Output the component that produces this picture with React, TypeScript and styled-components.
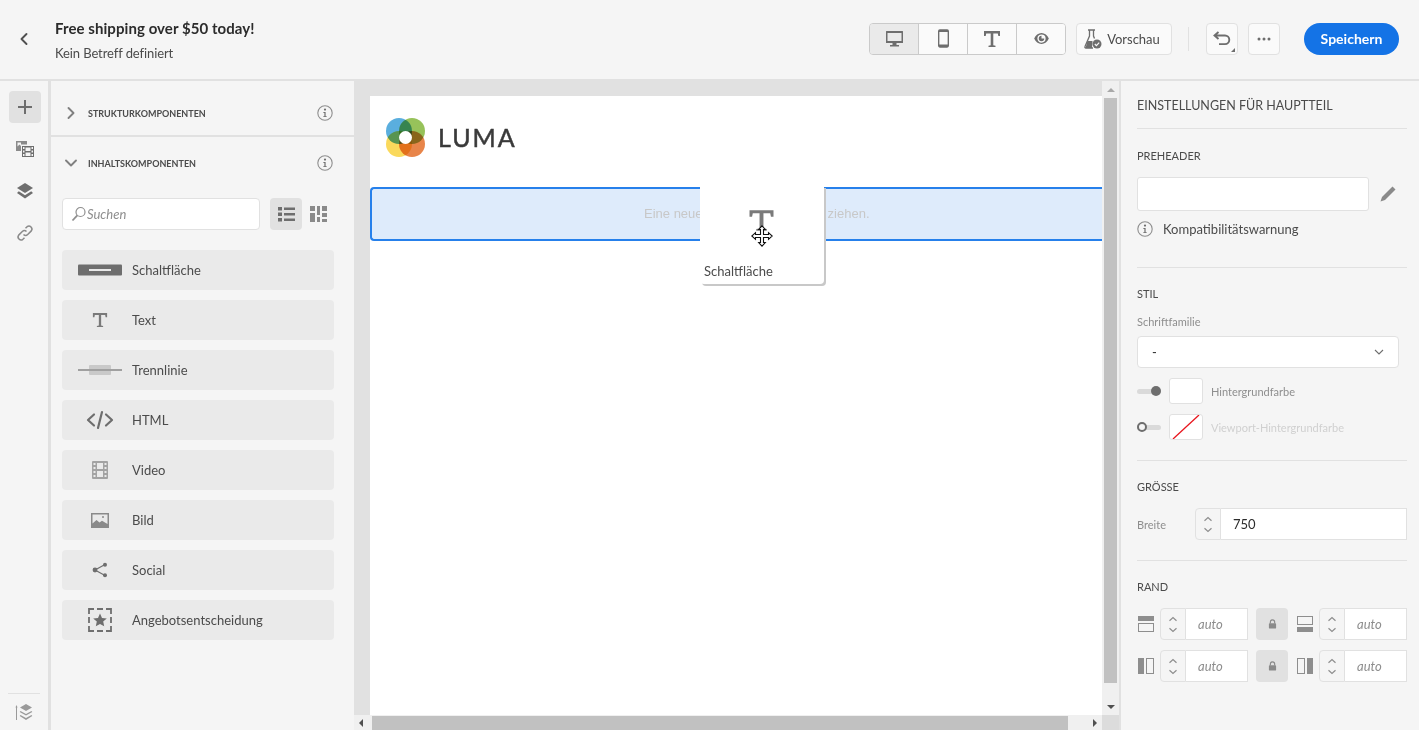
import React from "react";
import styled, { createGlobalStyle } from "styled-components";

const Global = createGlobalStyle`
  html, body { margin: 0; padding: 0; height: 100%; overflow: hidden; }
  body { font-family: "Lato", "Noto Sans", sans-serif; color: #4b4b4b; background: #f5f5f5; }
  * { box-sizing: border-box; }
`;

const Page = styled.div`
  width: 1419px;
  height: 730px;
  display: flex;
  flex-direction: column;
`;

/* ---------- header ---------- */
const Header = styled.header`
  height: 81px;
  flex: none;
  display: flex;
  align-items: center;
  padding: 0 20px 2px 17px;
  background: #f5f5f5;
  border-bottom: 2px solid #e1e1e1;
`;
const BackBtn = styled.div`
  width: 38px;
  display: flex;
  color: #505050;
`;
const Titles = styled.div`
  flex: 1;
  display: flex;
  flex-direction: column;
  gap: 7px;
  margin-top: 2px;
`;
const Title = styled.div`
  font-size: 15px;
  line-height: 20px;
  font-weight: 700;
  letter-spacing: 0.07px;
  color: #2c2c2c;
`;
const Subtitle = styled.div`
  font-size: 13px;
  line-height: 16px;
  letter-spacing: -0.1px;
  color: #4b4b4b;
`;
const Segments = styled.div`
  display: flex;
  height: 32px;
  border: 1px solid #cacaca;
  border-radius: 4px;
  background: #fafafa;
  overflow: hidden;
`;
const Segment = styled.div<{ $active?: boolean }>`
  width: ${({ $active }) => ($active ? "48px" : "49px")};
  display: flex;
  align-items: center;
  justify-content: center;
  background: ${({ $active }) => ($active ? "#eaeaea" : "#fafafa")};
  & + & { border-left: 1px solid #cacaca; }
`;
const ToolBtn = styled.div<{ $w: number; $ml: number; $pr?: number }>`
  height: 32px;
  width: ${({ $w }) => $w}px;
  margin-left: ${({ $ml }) => $ml}px;
  padding-right: ${({ $pr }) => $pr ?? 0}px;
  display: flex;
  align-items: center;
  justify-content: center;
  gap: 5px;
  position: relative;
  background: #fafafa;
  border: 1px solid #e1e1e1;
  border-radius: 4px;
  font-size: 13px;
  color: #4b4b4b;
`;
const CornerMark = styled.span`
  position: absolute;
  right: 2px;
  bottom: 2px;
  width: 0;
  height: 0;
  border-left: 4px solid transparent;
  border-bottom: 4px solid #6e6e6e;
`;
const HeadDivider = styled.div`
  width: 1px;
  height: 24px;
  margin-left: 16px;
  background: #e1e1e1;
`;
const SaveBtn = styled.div`
  width: 95px;
  height: 32px;
  margin-left: 24px;
  display: flex;
  align-items: center;
  justify-content: center;
  border-radius: 16px;
  background: #1473e6;
  color: #fff;
  font-size: 14px;
  font-weight: 700;
`;

/* ---------- body columns ---------- */
const Body = styled.div`
  flex: 1;
  min-height: 0;
  display: flex;
`;
const Rail = styled.nav`
  width: 51px;
  flex: none;
  display: flex;
  flex-direction: column;
  align-items: center;
  padding: 10px 0 0 2px;
  border-right: 3px solid #e1e1e1;
`;
const RailBtn = styled.div<{ $active?: boolean }>`
  width: 32px;
  height: 32px;
  margin-bottom: 10px;
  display: flex;
  align-items: center;
  justify-content: center;
  border-radius: 4px;
  background: ${({ $active }) => ($active ? "#e1e1e1" : "transparent")};
`;
const RailFoot = styled.div`
  margin: auto 2px 0 0;
  width: 32px;
  height: 37px;
  display: flex;
  align-items: center;
  justify-content: center;
  border-top: 1px solid #e1e1e1;
`;

const Panel = styled.aside`
  width: 303px;
  flex: none;
  display: flex;
  flex-direction: column;
`;
const Accordion = styled.div<{ $h: number; $pt?: number; $border?: boolean }>`
  height: ${({ $h }) => $h}px;
  flex: none;
  display: flex;
  align-items: center;
  padding: ${({ $pt }) => $pt ?? 0}px 21px 0 13px;
  border-bottom: ${({ $border }) => ($border ? "2px solid #e1e1e1" : "0")};
`;
const AccChevron = styled.span`
  width: 24px;
  display: flex;
  color: #808080;
`;
const AccLabel = styled.span`
  flex: 1;
  font-size: 9px;
  font-weight: 700;
  color: #4b4b4b;
  text-transform: uppercase;
`;
const SearchRow = styled.div`
  display: flex;
  align-items: center;
  padding: 9px 0 0 11px;
`;
const SearchBox = styled.div`
  width: 198px;
  height: 32px;
  display: flex;
  align-items: center;
  padding-left: 8px;
  background: #fff;
  border: 1px solid #e1e1e1;
  border-radius: 4px;
  font-size: 13px;
  font-style: italic;
  color: #8e8e8e;
`;
const ViewBtn = styled.div<{ $active?: boolean }>`
  width: 32px;
  height: 32px;
  margin-left: ${({ $active }) => ($active ? "10px" : "0")};
  display: flex;
  align-items: center;
  justify-content: ${({ $active }) => ($active ? "center" : "flex-start")};
  padding-left: ${({ $active }) => ($active ? "0" : "8px")};
  border-radius: 4px;
  background: ${({ $active }) => ($active ? "#e1e1e1" : "transparent")};
`;
const ItemList = styled.div`
  display: flex;
  flex-direction: column;
  gap: 10px;
  padding: 20px 20px 0 11px;
`;
const Item = styled.div`
  height: 40px;
  display: flex;
  align-items: center;
  border-radius: 4px;
  background: #eaeaea;
  font-size: 13px;
  color: #4b4b4b;
`;
const ItemIcon = styled.span`
  width: 70px;
  flex: none;
  display: flex;
  justify-content: center;
  padding-left: 5px;
`;

/* ---------- canvas ---------- */
const Canvas = styled.main`
  position: relative;
  width: 767px;
  flex: none;
  display: grid;
  grid-template-columns: 1fr 17px;
  grid-template-rows: 1fr 15px;
  background: #e1e1e1;
  border-right: 2px solid #e1e1e1;
`;
const Viewport = styled.div`
  padding: 15px 0 0 16px;
  min-height: 0;
`;
const EmailPage = styled.div`
  height: 100%;
  background: #fff;
  display: flex;
  flex-direction: column;
`;
const LogoRow = styled.div`
  height: 91px;
  flex: none;
  display: flex;
  align-items: center;
  gap: 13px;
  padding: 0 0 8px 16px;
`;
const LogoText = styled.span`
  font-size: 25px;
  line-height: 1;
  font-weight: 400;
  letter-spacing: 2px;
  color: #3a3a3a;
  -webkit-text-stroke: 0.5px #3a3a3a;
`;
const DropZone = styled.div`
  height: 54px;
  flex: none;
  display: flex;
  align-items: center;
  padding: 0 0 2px 272px;
  background: #deebfb;
  border: 2px solid #2680eb;
  border-right: 0;
  border-radius: 4px 0 0 4px;
  font-family: "Liberation Sans", Arial, sans-serif;
  font-size: 13px;
  color: #c8c8c8;
`;
const DragGhost = styled.div`
  position: absolute;
  left: 346px;
  top: 105px;
  width: 124px;
  height: 98px;
  padding: 0 0 0 4px;
  display: flex;
  flex-direction: column;
  background: #fff;
  border-radius: 0 0 4px 4px;
  box-shadow: 2px 2px 0 #c8c8c8;
  font-size: 13px;
  color: #4b4b4b;
`;
const GhostIcon = styled.div`
  position: relative;
  height: 77px;
  padding: 23px 0 0 44px;
`;
const GhostCursor = styled.span`
  position: absolute;
  left: 47px;
  top: 39px;
  display: flex;
`;
const VScroll = styled.div`
  display: flex;
  flex-direction: column;
  align-items: center;
  background: #f0f0f0;
  padding: 0 2px;
`;
const VArrowBox = styled.div<{ $end?: boolean }>`
  height: 17px;
  display: flex;
  align-items: center;
  justify-content: center;
  flex: none;
  margin-top: ${({ $end }) => ($end ? "auto" : "0")};
`;
const VThumb = styled.div`
  width: 13px;
  height: 585px;
  flex: none;
  background: #c1c1c1;
`;
const HScroll = styled.div`
  display: flex;
  align-items: center;
  background: #f0f0f0;
  padding: 0 5px 0 5px;
`;
const HThumb = styled.div`
  width: 696px;
  height: 14px;
  margin-left: 9px;
  background: #c1c1c1;
`;
const Corner = styled.div`
  background: #dcdcdc;
`;
const ArrowUp = styled.span<{ $c: string }>`
  border-left: 4px solid transparent;
  border-right: 4px solid transparent;
  border-bottom: 4px solid ${({ $c }) => $c};
`;
const ArrowDown = styled.span`
  border-left: 4px solid transparent;
  border-right: 4px solid transparent;
  border-top: 4px solid #505050;
`;
const ArrowLeft = styled.span`
  border-top: 4px solid transparent;
  border-bottom: 4px solid transparent;
  border-right: 4px solid #505050;
`;
const ArrowRight = styled.span`
  margin-left: auto;
  border-top: 4px solid transparent;
  border-bottom: 4px solid transparent;
  border-left: 4px solid #505050;
`;

/* ---------- settings ---------- */
const Settings = styled.aside`
  flex: 1;
  padding: 0 12px 0 16px;
`;
const Section = styled.section<{ $pb: number }>`
  padding-bottom: ${({ $pb }) => $pb}px;
  border-bottom: 1px solid #e1e1e1;
  &:last-child { border-bottom: 0; }
`;
const SettingsTitle = styled.div`
  height: 48px;
  padding-top: 1px;
  display: flex;
  align-items: center;
  font-size: 12.5px;
  color: #4b4b4b;
  border-bottom: 1px solid #e1e1e1;
`;
const SectionLabel = styled.div<{ $h: number; $pt: number }>`
  height: ${({ $h }) => $h}px;
  padding-top: ${({ $pt }) => $pt}px;
  display: flex;
  align-items: center;
  font-size: 11px;
  color: #4b4b4b;
`;
const Row = styled.div`
  display: flex;
  align-items: center;
`;
const TextField = styled.div`
  width: 232px;
  height: 34px;
  background: #fff;
  border: 1px solid #e1e1e1;
  border-radius: 3px;
`;
const PencilWrap = styled.span`
  display: flex;
  margin-left: 11px;
`;
const InfoRow = styled(Row)`
  height: 36px;
  gap: 10px;
  font-size: 13px;
  color: #4b4b4b;
`;
const FieldLabel = styled.div`
  height: 22px;
  margin: -5px 0 4px;
  display: flex;
  align-items: center;
  font-size: 11px;
  color: #8e8e8e;
`;
const Select = styled.div`
  width: 262px;
  height: 32px;
  display: flex;
  align-items: center;
  justify-content: space-between;
  padding: 0 14px;
  background: #fff;
  border: 1px solid #e1e1e1;
  border-radius: 4px;
  font-size: 13px;
  color: #2c2c2c;
`;
const ColorRow = styled(Row)`
  margin-top: 10px;
  gap: 8px;
`;
const Toggle = styled.span`
  position: relative;
  width: 24px;
  height: 12px;
  display: flex;
  align-items: center;
  &::before {
    content: "";
    width: 100%;
    height: 5px;
    border-radius: 3px;
    background: #dadada;
  }
`;
const Knob = styled.span<{ $on?: boolean }>`
  position: absolute;
  top: 1px;
  left: ${({ $on }) => ($on ? "14px" : "0")};
  width: 10px;
  height: 10px;
  border-radius: 50%;
  background: ${({ $on }) => ($on ? "#6e6e6e" : "#f5f5f5")};
  border: ${({ $on }) => ($on ? "0" : "2px solid #6e6e6e")};
`;
const Swatch = styled.span`
  width: 34px;
  height: 26px;
  display: flex;
  background: #fff;
  border: 1px solid #e1e1e1;
  border-radius: 3px;
`;
const ColorLabel = styled.span<{ $off?: boolean }>`
  font-size: 11px;
  color: ${({ $off }) => ($off ? "#d0d0d0" : "#8e8e8e")};
`;
const WidthLabel = styled.span`
  width: 58px;
  font-size: 11px;
  color: #8e8e8e;
`;
const Stepper = styled.div`
  flex: none;
  width: 26px;
  height: 32px;
  display: flex;
  flex-direction: column;
  align-items: center;
  justify-content: center;
  gap: 5px;
  background: #f5f5f5;
  border: 1px solid #e1e1e1;
  border-radius: 4px 0 0 4px;
`;
const NumberValue = styled.div<{ $w: number; $auto?: boolean }>`
  width: ${({ $w }) => $w}px;
  height: 32px;
  display: flex;
  align-items: center;
  padding-left: 12px;
  background: #fff;
  border: 1px solid #e1e1e1;
  border-left: 0;
  font-size: 13px;
  font-style: ${({ $auto }) => ($auto ? "italic" : "normal")};
  color: ${({ $auto }) => ($auto ? "#8e8e8e" : "#2c2c2c")};
`;
const MarginRow = styled(Row)`
  margin-bottom: 10px;
`;
const MarginIcon = styled.span`
  width: 23px;
  flex: none;
  display: flex;
  padding-left: 1px;
`;
const LockBtn = styled.div`
  width: 32px;
  height: 32px;
  margin: 0 8px;
  flex: none;
  display: flex;
  align-items: center;
  justify-content: center;
  border-radius: 4px;
  background: #e1e1e1;
`;

/* ---------- icons ---------- */
const G = "#6e6e6e";

const Chevron = ({ dir, size = 14 }: { dir: "left" | "right" | "down"; size?: number }) => {
  const d = dir === "left" ? "M9.5 2 4.5 7l5 5" : dir === "right" ? "M4.5 2l5 5-5 5" : "M2 4.5l5 5 5-5";
  return (
    <svg width={size} height={size} viewBox="0 0 14 14" fill="none" stroke="currentColor" strokeWidth="1.9" strokeLinecap="round" strokeLinejoin="round">
      <path d={d} />
    </svg>
  );
};

const Info = () => (
  <svg width="16" height="16" viewBox="0 0 16 16" fill="none">
    <circle cx="8" cy="8" r="7.2" stroke="#8e8e8e" strokeWidth="1.1" />
    <circle cx="8" cy="4.6" r="1.1" fill="#6e6e6e" />
    <path d="M6.4 7h2.2v4.2h1.1v.9H6.3v-.9h1.1V7.9h-1z" fill="#6e6e6e" />
  </svg>
);

const Step = () => (
  <>
    <svg width="10" height="6" viewBox="0 0 10 6" fill="none" stroke="#8e8e8e" strokeWidth="1.2"><path d="M1.5 4.8 5 1.5l3.5 3.3" /></svg>
    <svg width="10" height="6" viewBox="0 0 10 6" fill="none" stroke="#8e8e8e" strokeWidth="1.2"><path d="M1.5 1.2 5 4.5l3.5-3.3" /></svg>
  </>
);

const Lock = () => (
  <svg width="9" height="10" viewBox="0 0 10 11" fill="none">
    <path d="M2.6 5V3.3a2.4 2.4 0 0 1 4.8 0V5" stroke="#8a8a8a" strokeWidth="1.3" />
    <rect x="1" y="4.6" width="8" height="6" rx="1" fill="#8a8a8a" />
  </svg>
);

// thick slab T, same drawing for toolbar, list and drag ghost
const TGlyph = ({ w = 18, h = 18, c = G }: { w?: number; h?: number; c?: string }) => (
  <svg width={w} height={h} viewBox="0 0 18 18" fill={c} preserveAspectRatio="none">
    <path d="M1 1h16v5h-1.700l-.5-2.600H10.300v11.800l2.200.5V17h-7v-1.300l2.200-.5V3.400H3.200L2.700 6H1z" />
  </svg>
);

const MarginGlyph = ({ side }: { side: "top" | "bottom" | "left" | "right" }) => {
  const solid = { top: [0, 0, 16, 5], bottom: [0, 11, 16, 5], left: [0, 0, 6, 16], right: [10, 0, 6, 16] }[side];
  const line = { top: [0.5, 7.5, 15, 8], bottom: [0.5, 0.5, 15, 8], left: [8.5, 0.5, 7, 15], right: [0.5, 0.5, 7, 15] }[side];
  return (
    <svg width="16" height="16" viewBox="0 0 16 16">
      <rect x={solid[0]} y={solid[1]} width={solid[2]} height={solid[3]} fill="#8e8e8e" />
      <rect x={line[0]} y={line[1]} width={line[2]} height={line[3]} fill="none" stroke="#8e8e8e" />
    </svg>
  );
};

const items: { label: string; icon: React.ReactNode }[] = [
  {
    label: "Schaltfläche",
    icon: (
      <svg width="44" height="12" viewBox="0 0 44 12">
        <rect width="44" height="11" y="0.500" rx="1" fill={G} />
        <rect x="11" y="5" width="22" height="2" fill="#e8e8e8" />
      </svg>
    ),
  },
  { label: "Text", icon: <TGlyph w={16} h={16} c="#7a7a7a" /> },
  {
    label: "Trennlinie",
    icon: (
      <svg width="44" height="10" viewBox="0 0 44 10">
        <rect x="11" width="22" height="10" rx="1" fill="#c9c9c9" />
        <rect y="4" width="44" height="2" fill="#a0a0a0" />
      </svg>
    ),
  },
  {
    label: "HTML",
    icon: (
      <svg width="28" height="20" viewBox="0 0 28 20" fill="none" stroke={G} strokeWidth="2.200" strokeLinecap="round" strokeLinejoin="round">
        <path d="M8 4.500 2 10l6 5.500M20 4.500 26 10l-6 5.500M16 2l-4 16" />
      </svg>
    ),
  },
  {
    label: "Video",
    icon: (
      <svg width="16" height="18" viewBox="0 0 16 18" fill="#a3a3a3">
        <path fillRule="evenodd" d="M1 0h14a1 1 0 0 1 1 1v16a1 1 0 0 1-1 1H1a1 1 0 0 1-1-1V1a1 1 0 0 1 1-1zm.500 2v2h2V2zm0 4v2h2V6zm0 4v2h2v-2zm0 4v2h2v-2zm11-12v2h2V2zm0 4v2h2V6zm0 4v2h2v-2zm0 4v2h2v-2zM5 2v6h6V2zm0 8v6h6v-6z" />
      </svg>
    ),
  },
  {
    label: "Bild",
    icon: (
      <svg width="18" height="15" viewBox="0 0 18 15">
        <path fillRule="evenodd" fill="#8a8a8a" d="M0 0h18v15H0zm1.500 1.500v9l4-3.500 3 2.500 2.500-1.800 5.500 3.300V1.500z" />
        <circle cx="12" cy="4" r="1" fill="#8a8a8a" />
      </svg>
    ),
  },
  {
    label: "Social",
    icon: (
      <svg width="16" height="16" viewBox="0 0 16 16" fill={G} stroke={G}>
        <path d="M13 2.500 3 8l10 5.500" fill="none" strokeWidth="1.200" />
        <circle cx="13" cy="2.700" r="2" stroke="none" />
        <circle cx="3" cy="8" r="2.400" stroke="none" />
        <circle cx="13" cy="13.300" r="2" stroke="none" />
      </svg>
    ),
  },
  {
    label: "Angebotsentscheidung",
    icon: (
      <svg width="24" height="24" viewBox="0 0 24 24" fill="none">
        <path d="M1 6V1h5M9 1h6M18 1h5v5M23 9v6M23 18v5h-5M15 23H9M6 23H1v-5M1 15V9" stroke={G} strokeWidth="1.800" />
        <path d="m12 5.500 2 4.400 4.800.5-3.600 3.200 1 4.700-4.200-2.400-4.200 2.400 1-4.700-3.600-3.200 4.800-.5z" fill={G} />
      </svg>
    ),
  },
];

export default function App() {
  return (
    <Page>
      <Global />
      <Header>
        <BackBtn><Chevron dir="left" /></BackBtn>
        <Titles>
          <Title>Free shipping over $50 today!</Title>
          <Subtitle>Kein Betreff definiert</Subtitle>
        </Titles>
        <Segments>
          <Segment $active>
            <svg width="19" height="18" viewBox="0 0 18 18" fill={G}>
              <path fillRule="evenodd" d="M1 1h16a.500.500 0 0 1 .500.500v11a.500.500 0 0 1-.500.500H11v2h2.500v1.500h-9V15H7v-2H1a.500.500 0 0 1-.500-.500v-11A.500.500 0 0 1 1 1zm1 2v8h14V3z" />
            </svg>
          </Segment>
          <Segment>
            <svg width="11" height="19" viewBox="0 0 12 20" fill={G}>
              <path fillRule="evenodd" d="M2 0h8a2 2 0 0 1 2 2v16a2 2 0 0 1-2 2H2a2 2 0 0 1-2-2V2a2 2 0 0 1 2-2zm-.500 3v13.500h9V3z" />
            </svg>
          </Segment>
          <Segment><TGlyph /></Segment>
          <Segment>
            <svg width="15" height="11" viewBox="0 0 16 12">
              <path fillRule="evenodd" fill={G} d="M8 0c3.600 0 6.400 2.600 8 6-1.600 3.400-4.400 6-8 6S1.600 9.400 0 6c1.600-3.400 4.400-6 8-6zm0 1.500a4.500 4.500 0 1 0 0 9 4.500 4.500 0 0 0 0-9z" />
              <path fill={G} d="M8 3a3 3 0 1 0 3 3H8z" />
            </svg>
          </Segment>
        </Segments>
        <ToolBtn $w={96} $ml={10} $pr={4}>
          <svg width="18" height="20" viewBox="0 0 18 20">
            <path d="M4 1h7M5.500 1v6L1 17.500a1 1 0 0 0 1 1.500h7" fill="none" stroke={G} strokeWidth="1.300" />
            <path d="M9.500 1v6l1 2.500" fill="none" stroke={G} strokeWidth="1.300" />
            <path d="M3.500 12h5L8 19H1.500z" fill={G} />
            <circle cx="13" cy="15" r="4.500" fill={G} />
            <path d="m10.800 15 1.600 1.600 2.800-3" fill="none" stroke="#fafafa" strokeWidth="1.200" />
          </svg>
          Vorschau
        </ToolBtn>
        <HeadDivider />
        <ToolBtn $w={32} $ml={17}>
          <svg width="18" height="15" viewBox="0 0 18 15" fill="none" stroke={G} strokeWidth="1.900">
            <path d="M5.500 1 1.500 4.500l4 3.500M2 4.500h10a4.300 4.300 0 0 1 0 8.600H6" />
          </svg>
          <CornerMark />
        </ToolBtn>
        <ToolBtn $w={32} $ml={10}>
          <svg width="14" height="4" viewBox="0 0 14 4" fill={G}>
            <circle cx="2" cy="2" r="1.500" /><circle cx="7" cy="2" r="1.500" /><circle cx="12" cy="2" r="1.500" />
          </svg>
        </ToolBtn>
        <SaveBtn>Speichern</SaveBtn>
      </Header>

      <Body>
        <Rail>
          <RailBtn $active>
            <svg width="14" height="14" viewBox="0 0 14 14" fill={G}><path d="M6 0h2v6h6v2H8v6H6V8H0V6h6z" /></svg>
          </RailBtn>
          <RailBtn>
            <svg width="18" height="16" viewBox="0 0 18 16" fill={G}>
              <path fillRule="evenodd" fill="#8a8a8a" d="M0 0h11v3.500H5V10H0zm1.500 5.500 2-2 1.500 1.500V1.500H1.500z" />
              <path fillRule="evenodd" d="M6 5h12v11H6zm1 1v2h1.500V6zm0 3.500v2h1.500v-2zm0 3.500v2h1.500v-2zM15.500 6v2H17V6zm0 3.500v2H17v-2zm0 3.500v2H17v-2zM9.500 6.500v3.500h5V6.500zm0 5v3.500h5v-3.500z" />
            </svg>
          </RailBtn>
          <RailBtn>
            <svg width="16" height="16" viewBox="0 0 16 16" fill={G}>
              <path d="M8 0l8 5-8 5-8-5z" />
              <path d="M1.800 8.300 8 12.200l6.200-3.900L16 10l-8 5.500L0 10z" />
            </svg>
          </RailBtn>
          <RailBtn>
            <svg width="18" height="18" viewBox="0 0 18 18" fill="none" stroke="#8a8a8a" strokeWidth="1.500">
              <path d="M7.500 10.500a3 3 0 0 0 4.200 0l3.600-3.600a3 3 0 0 0-4.200-4.200L9.500 4.300" />
              <path d="M10.500 7.500a3 3 0 0 0-4.200 0l-3.600 3.600a3 3 0 0 0 4.200 4.200l1.600-1.600" />
            </svg>
          </RailBtn>
          <RailFoot>
            <svg width="18" height="17" viewBox="0 0 18 17" fill="#9a9a9a">
              <path d="M1 16V3L0 4.500 1.500 1 3 4.500 2 3v13z" />
              <path d="M11 0l6 3.500-6 3.500-6-3.500z" />
              <path d="m5.500 7 5.500 3 5.500-3 .8 1L11 11.500 4.700 8zM5.500 11l5.500 3 5.500-3 .8 1L11 16l-6.300-4z" />
            </svg>
          </RailFoot>
        </Rail>

        <Panel>
          <Accordion $h={56} $pt={10} $border>
            <AccChevron><Chevron dir="right" /></AccChevron>
            <AccLabel>Strukturkomponenten</AccLabel>
            <Info />
          </Accordion>
          <Accordion $h={52}>
            <AccChevron><Chevron dir="down" /></AccChevron>
            <AccLabel>Inhaltskomponenten</AccLabel>
            <Info />
          </Accordion>
          <SearchRow>
            <SearchBox>
              <svg width="16" height="16" viewBox="0 0 16 16" fill="none" stroke="#8e8e8e" strokeWidth="1.200">
                <circle cx="9.500" cy="6" r="4.500" />
                <path d="M6.300 9.300 1.500 14.500" strokeWidth="1.800" />
              </svg>
              Suchen
            </SearchBox>
            <ViewBtn $active>
              <svg width="17" height="16" viewBox="0 0 17 16" fill={G}>
                <path d="M0 1h4v3.500H0zM6 1.500h11v2.500H6zM0 6.500h4V10H0zM6 7h11v2.500H6zM0 12h4v3.500H0zM6 12.500h11V15H6z" />
              </svg>
            </ViewBtn>
            <ViewBtn>
              <svg width="17" height="16" viewBox="0 0 17 16" fill="#8a8a8a">
                <path d="M0 0h5v5H0zM0 7h5v9H0zM7 0h3v9H7zM7 11h3v5H7zM12 0h5v5h-5zM12 7h5v4h-5zM12 13h5v3h-5z" />
              </svg>
            </ViewBtn>
          </SearchRow>
          <ItemList>
            {items.map((it) => (
              <Item key={it.label}>
                <ItemIcon>{it.icon}</ItemIcon>
                {it.label}
              </Item>
            ))}
          </ItemList>
        </Panel>

        <Canvas>
          <Viewport>
            <EmailPage>
              <LogoRow>
                <svg width="39" height="39" viewBox="0 0 39 39">
                  <circle cx="13" cy="13" r="13" fill="#5aaede" />
                  <circle cx="26" cy="13" r="13" fill="#97c25a" style={{ mixBlendMode: "multiply" }} />
                  <circle cx="13" cy="26" r="13" fill="#fad95c" style={{ mixBlendMode: "multiply" }} />
                  <circle cx="26" cy="26" r="13" fill="#e8854a" style={{ mixBlendMode: "multiply" }} />
                  <circle cx="19.500" cy="19.500" r="6.500" fill="#fff" />
                </svg>
                <LogoText>LUMA</LogoText>
              </LogoRow>
              <DropZone>Eine neue Komponente hierher ziehen.</DropZone>
            </EmailPage>
          </Viewport>
          <VScroll>
            <VArrowBox><ArrowUp $c="#a8a8a8" /></VArrowBox>
            <VThumb />
            <VArrowBox $end><ArrowDown /></VArrowBox>
          </VScroll>
          <HScroll>
            <ArrowLeft />
            <HThumb />
            <ArrowRight />
          </HScroll>
          <Corner />

          <DragGhost>
            <GhostIcon>
              <TGlyph w={27} h={23} c="#7a7a7a" />
              <GhostCursor>
                <svg width="22" height="22" viewBox="0 0 22 22" fill="#fff" stroke="#111" strokeWidth="1.100" strokeLinejoin="miter">
                  <path d="M11 .8 14.300 4.500H12.500V9.500H17.500V7.700L21.200 11 17.500 14.300V12.500H12.500V17.500H14.300L11 21.200 7.700 17.500H9.500V12.500H4.500V14.300L.8 11 4.500 7.700V9.500H9.500V4.500H7.700Z" />
                </svg>
              </GhostCursor>
            </GhostIcon>
            Schaltfläche
          </DragGhost>
        </Canvas>

        <Settings>
          <SettingsTitle>EINSTELLUNGEN FÜR HAUPTTEIL</SettingsTitle>
          <Section $pb={20}>
            <SectionLabel $h={48} $pt={5}>PREHEADER</SectionLabel>
            <Row>
              <TextField />
              <PencilWrap>
                <svg width="16" height="16" viewBox="0 0 16 16" fill="#8a8a8a">
                  <path d="M12.500.500 15.500 3.500 5 14 .500 15.500 2 11z" />
                </svg>
              </PencilWrap>
            </Row>
            <InfoRow><Info />Kompatibilitätswarnung</InfoRow>
          </Section>
          <Section $pb={20}>
            <SectionLabel $h={47} $pt={4}>STIL</SectionLabel>
            <FieldLabel>Schriftfamilie</FieldLabel>
            <Select>
              -
              <svg width="10" height="6" viewBox="0 0 10 6" fill="none" stroke="#6e6e6e" strokeWidth="1.100"><path d="M1 1l4 4 4-4" /></svg>
            </Select>
            <ColorRow>
              <Toggle><Knob $on /></Toggle>
              <Swatch />
              <ColorLabel>Hintergrundfarbe</ColorLabel>
            </ColorRow>
            <ColorRow>
              <Toggle><Knob /></Toggle>
              <Swatch>
                <svg width="32" height="24" viewBox="0 0 32 24"><path d="M3 24 29 0" stroke="#e8141c" strokeWidth="1.300" /></svg>
              </Swatch>
              <ColorLabel $off>Viewport-Hintergrundfarbe</ColorLabel>
            </ColorRow>
          </Section>
          <Section $pb={20}>
            <SectionLabel $h={47} $pt={4}>GRÖSSE</SectionLabel>
            <Row>
              <WidthLabel>Breite</WidthLabel>
              <Stepper><Step /></Stepper>
              <NumberValue $w={186}>750</NumberValue>
            </Row>
          </Section>
          <Section $pb={0}>
            <SectionLabel $h={47} $pt={4}>RAND</SectionLabel>
            <MarginRow>
              <MarginIcon><MarginGlyph side="top" /></MarginIcon>
              <Stepper><Step /></Stepper>
              <NumberValue $w={62} $auto>auto</NumberValue>
              <LockBtn><Lock /></LockBtn>
              <MarginIcon><MarginGlyph side="bottom" /></MarginIcon>
              <Stepper><Step /></Stepper>
              <NumberValue $w={62} $auto>auto</NumberValue>
            </MarginRow>
            <MarginRow>
              <MarginIcon><MarginGlyph side="left" /></MarginIcon>
              <Stepper><Step /></Stepper>
              <NumberValue $w={62} $auto>auto</NumberValue>
              <LockBtn><Lock /></LockBtn>
              <MarginIcon><MarginGlyph side="right" /></MarginIcon>
              <Stepper><Step /></Stepper>
              <NumberValue $w={62} $auto>auto</NumberValue>
            </MarginRow>
          </Section>
        </Settings>
      </Body>
    </Page>
  );
}
